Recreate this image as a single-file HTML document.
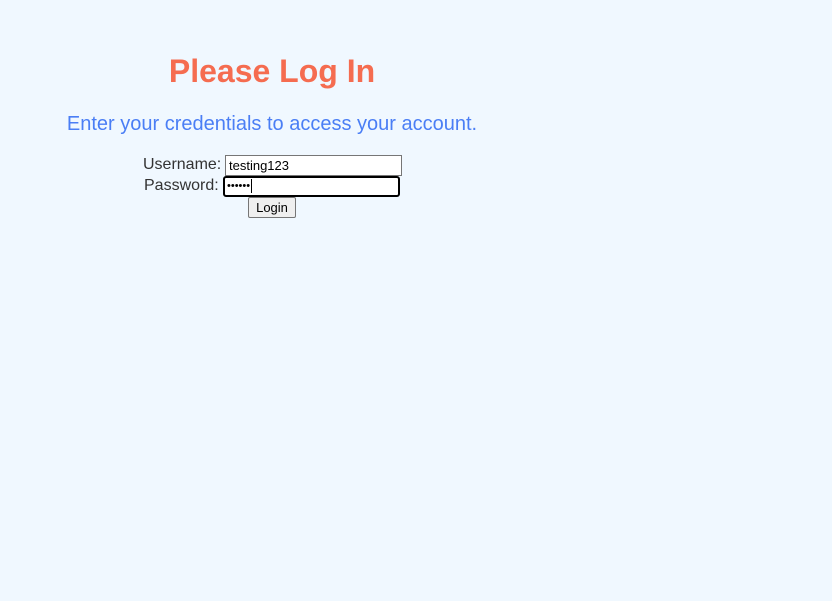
<!DOCTYPE html>
<html><head><style>
html,body{margin:0;padding:0;width:832px;height:601px;background:#f0f8ff;overflow:hidden;font-family:"Liberation Sans",Arial,sans-serif}
.a{position:absolute;white-space:nowrap}
h1{margin:0;font-size:32px;font-weight:bold;color:#f56c50;position:absolute;left:0;width:544px;text-align:center;top:53px}
.sub{left:0;width:544px;text-align:center;top:113px;font-size:20px;color:#4a7ef5}
.lbl{font-size:16px;color:#333}
.in{position:absolute;box-sizing:border-box;background:#fff;font-size:13px;color:#000;padding:2px 3px;line-height:15px}
.btn{position:absolute;box-sizing:border-box;left:248px;top:197px;width:48px;height:21px;background:#efefef;border:1px solid #767676;border-radius:2px;font-size:13px;text-align:center;line-height:20px;color:#000}
</style></head><body>
<h1>Please Log In</h1>
<div class="a sub">Enter your credentials to access your account.</div>
<div class="a lbl" style="left:143px;top:156px">Username:</div>
<div class="in" style="left:225px;top:155px;width:177px;height:21px;border:1px solid #767676">testing123</div>
<div class="a lbl" style="left:144px;top:177px">Password:</div>
<div class="in" style="left:223px;top:176px;width:177px;height:21px;border:2px solid #000;border-radius:3px;padding:1px 2px;font-size:11px;letter-spacing:0px">••••••<span style="display:inline-block;width:1px;height:14px;background:#000;vertical-align:middle;margin-left:1px"></span></div>
<div class="btn">Login</div>
</body></html>
